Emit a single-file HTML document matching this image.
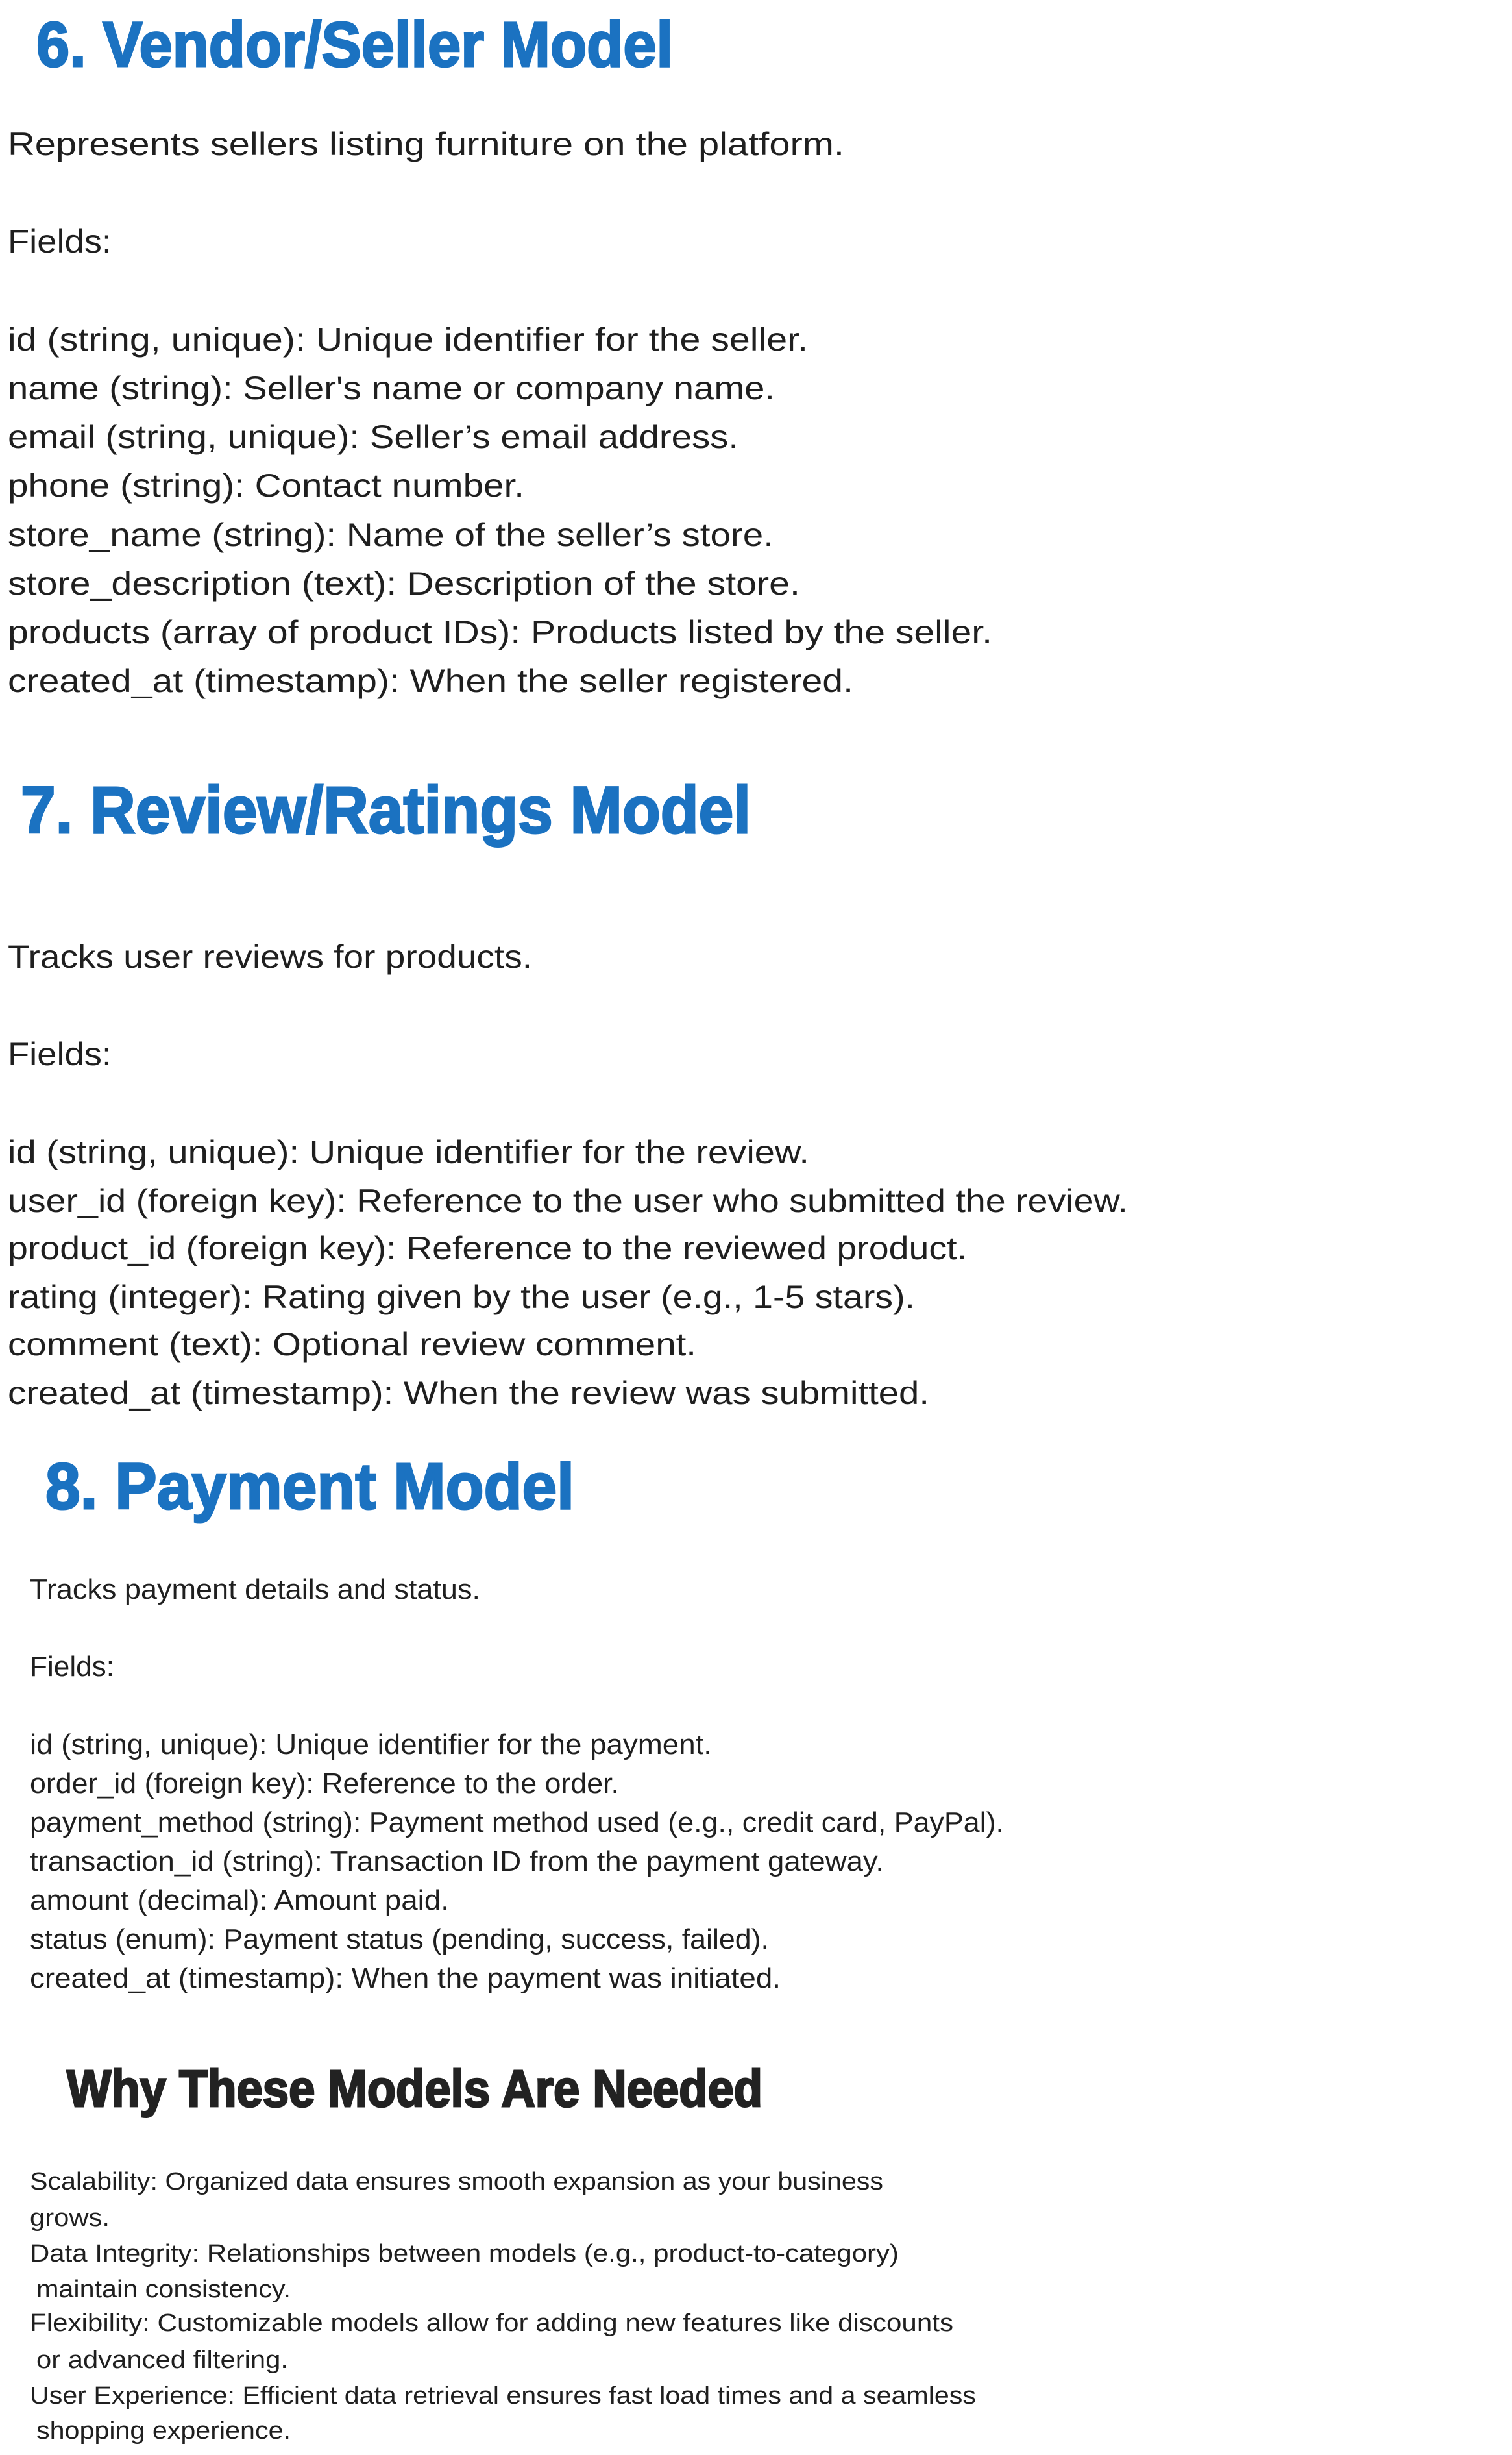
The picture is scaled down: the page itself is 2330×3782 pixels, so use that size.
<!DOCTYPE html>
<html><head><meta charset="utf-8"><style>
html,body{margin:0;padding:0;background:#fff;}
svg{display:block;}
.h{font-family:"Liberation Sans",sans-serif;font-weight:bold;fill:#1b72c1;stroke:#1b72c1;stroke-width:3;}
.k{font-family:"Liberation Sans",sans-serif;font-weight:bold;fill:#222;stroke:#222;stroke-width:3;}
.b{font-family:"Liberation Sans",sans-serif;fill:#1f1f1f;font-size:50px;}
.p{font-family:"Liberation Sans",sans-serif;fill:#1f1f1f;font-size:44px;}
.w{font-family:"Liberation Sans",sans-serif;fill:#1f1f1f;font-size:38px;}
</style></head><body>
<svg width="2330" height="3782" viewBox="0 0 2330 3782" xmlns="http://www.w3.org/2000/svg">
<text class="h" x="56" y="102" font-size="97" textLength="981" lengthAdjust="spacingAndGlyphs">6. Vendor/Seller Model</text>
<g transform="translate(0,-4)">
<text class="b" x="12" y="243" textLength="1289" lengthAdjust="spacingAndGlyphs">Represents sellers listing furniture on the platform.</text>
<text class="b" x="12" y="393" textLength="160" lengthAdjust="spacingAndGlyphs">Fields:</text>
<text class="b" x="12" y="544" textLength="1233" lengthAdjust="spacingAndGlyphs">id (string, unique): Unique identifier for the seller.</text>
<text class="b" x="12" y="619" textLength="1182" lengthAdjust="spacingAndGlyphs">name (string): Seller's name or company name.</text>
<text class="b" x="12" y="694" textLength="1126" lengthAdjust="spacingAndGlyphs">email (string, unique): Seller’s email address.</text>
<text class="b" x="12" y="769" textLength="796" lengthAdjust="spacingAndGlyphs">phone (string): Contact number.</text>
<text class="b" x="12" y="845" textLength="1180" lengthAdjust="spacingAndGlyphs">store_name (string): Name of the seller’s store.</text>
<text class="b" x="12" y="920" textLength="1221" lengthAdjust="spacingAndGlyphs">store_description (text): Description of the store.</text>
<text class="b" x="12" y="995" textLength="1517" lengthAdjust="spacingAndGlyphs">products (array of product IDs): Products listed by the seller.</text>
<text class="b" x="12" y="1070" textLength="1303" lengthAdjust="spacingAndGlyphs">created_at (timestamp): When the seller registered.</text>
</g>
<text class="h" x="32" y="1283" font-size="102" textLength="1125" lengthAdjust="spacingAndGlyphs">7. Review/Ratings Model</text>
<g transform="translate(0,-4)">
<text class="b" x="12" y="1495" textLength="808" lengthAdjust="spacingAndGlyphs">Tracks user reviews for products.</text>
<text class="b" x="12" y="1645" textLength="160" lengthAdjust="spacingAndGlyphs">Fields:</text>
<text class="b" x="12" y="1796" textLength="1235" lengthAdjust="spacingAndGlyphs">id (string, unique): Unique identifier for the review.</text>
<text class="b" x="12" y="1871" textLength="1726" lengthAdjust="spacingAndGlyphs">user_id (foreign key): Reference to the user who submitted the review.</text>
<text class="b" x="12" y="1944" textLength="1478" lengthAdjust="spacingAndGlyphs">product_id (foreign key): Reference to the reviewed product.</text>
<text class="b" x="12" y="2019" textLength="1398" lengthAdjust="spacingAndGlyphs">rating (integer): Rating given by the user (e.g., 1-5 stars).</text>
<text class="b" x="12" y="2092" textLength="1061" lengthAdjust="spacingAndGlyphs">comment (text): Optional review comment.</text>
<text class="b" x="12" y="2167" textLength="1420" lengthAdjust="spacingAndGlyphs">created_at (timestamp): When the review was submitted.</text>
</g>
<text class="h" x="70" y="2324" font-size="100" textLength="815" lengthAdjust="spacingAndGlyphs">8. Payment Model</text>
<text class="p" x="46" y="2463" textLength="694" lengthAdjust="spacingAndGlyphs">Tracks payment details and status.</text>
<text class="p" x="46" y="2582" textLength="130" lengthAdjust="spacingAndGlyphs">Fields:</text>
<text class="p" x="46" y="2702" textLength="1051" lengthAdjust="spacingAndGlyphs">id (string, unique): Unique identifier for the payment.</text>
<text class="p" x="46" y="2762" textLength="908" lengthAdjust="spacingAndGlyphs">order_id (foreign key): Reference to the order.</text>
<text class="p" x="46" y="2822" textLength="1501" lengthAdjust="spacingAndGlyphs">payment_method (string): Payment method used (e.g., credit card, PayPal).</text>
<text class="p" x="46" y="2882" textLength="1316" lengthAdjust="spacingAndGlyphs">transaction_id (string): Transaction ID from the payment gateway.</text>
<text class="p" x="46" y="2942" textLength="646" lengthAdjust="spacingAndGlyphs">amount (decimal): Amount paid.</text>
<text class="p" x="46" y="3002" textLength="1139" lengthAdjust="spacingAndGlyphs">status (enum): Payment status (pending, success, failed).</text>
<text class="p" x="46" y="3062" textLength="1157" lengthAdjust="spacingAndGlyphs">created_at (timestamp): When the payment was initiated.</text>

<text class="k" x="103" y="3245" font-size="80" textLength="1072" lengthAdjust="spacingAndGlyphs">Why These Models Are Needed</text>
<text class="w" x="46" y="3373" textLength="1315" lengthAdjust="spacingAndGlyphs">Scalability: Organized data ensures smooth expansion as your business</text>
<text class="w" x="46" y="3429" textLength="123" lengthAdjust="spacingAndGlyphs">grows.</text>
<text class="w" x="46" y="3484" textLength="1339" lengthAdjust="spacingAndGlyphs">Data Integrity: Relationships between models (e.g., product-to-category)</text>
<text class="w" x="56" y="3539" textLength="392" lengthAdjust="spacingAndGlyphs">maintain consistency.</text>
<text class="w" x="46" y="3591" textLength="1423" lengthAdjust="spacingAndGlyphs">Flexibility: Customizable models allow for adding new features like discounts</text>
<text class="w" x="56" y="3648" textLength="388" lengthAdjust="spacingAndGlyphs">or advanced filtering.</text>
<text class="w" x="46" y="3703" textLength="1458" lengthAdjust="spacingAndGlyphs">User Experience: Efficient data retrieval ensures fast load times and a seamless</text>
<text class="w" x="56" y="3757" textLength="392" lengthAdjust="spacingAndGlyphs">shopping experience.</text>
</svg>
</body></html>
